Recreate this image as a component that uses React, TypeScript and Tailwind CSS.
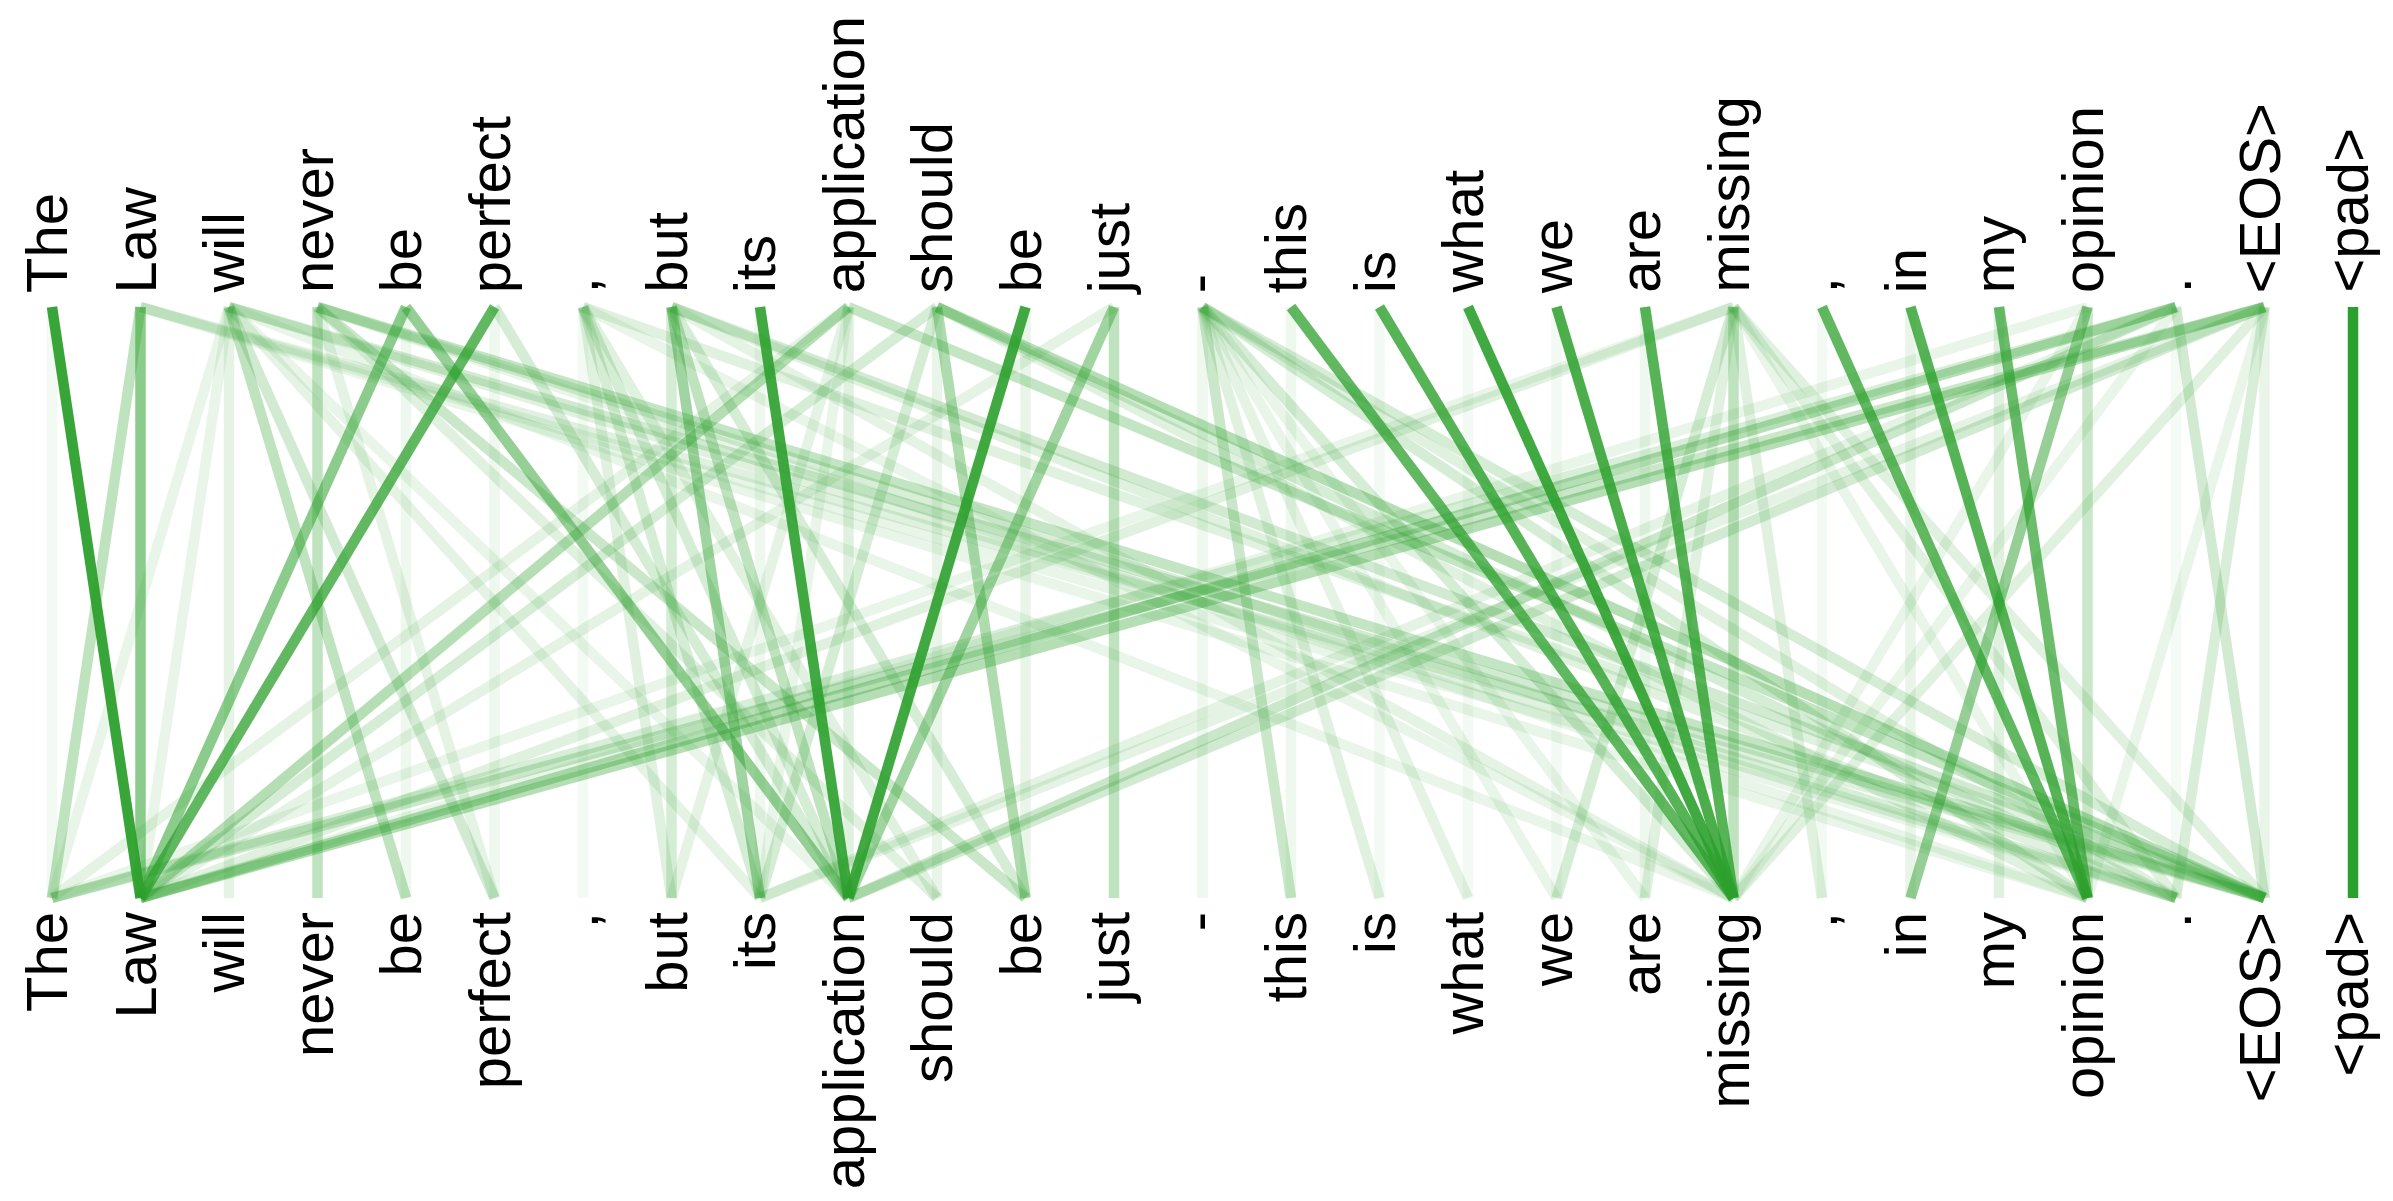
import React from "react";

const TOKENS = [
  "The", "Law", "will", "never", "be", "perfect", ",", "but", "its", "application",
  "should", "be", "just", "-", "this", "is", "what", "we", "are", "missing",
  ",", "in", "my", "opinion", ".", "<EOS>", "<pad>",
];

const X0 = 52;
const STEP = 88.5;
const Y_TOP = 7;
const Y_BOTTOM = 598;

// [top token, bottom token, weight]
const LINKS: [number, number, number][] = [
  [0, 1, 0.95], [0, 0, 0.06],
  [1, 1, 0.55], [1, 0, 0.3], [1, 25, 0.15], [1, 23, 0.1], [1, 24, 0.1],
  [2, 2, 0.12], [2, 4, 0.3], [2, 5, 0.22], [2, 0, 0.1], [2, 1, 0.1], [2, 25, 0.22],
  [2, 24, 0.15], [2, 19, 0.1], [2, 9, 0.1], [2, 8, 0.12],
  [3, 3, 0.3], [3, 11, 0.25], [3, 25, 0.28], [3, 24, 0.18], [3, 5, 0.12], [3, 10, 0.15], [3, 23, 0.1],
  [4, 1, 0.55], [4, 9, 0.5], [4, 4, 0.08],
  [5, 1, 0.75], [5, 9, 0.2], [5, 5, 0.08],
  [6, 8, 0.2], [6, 9, 0.2], [6, 10, 0.15], [6, 19, 0.1], [6, 25, 0.15], [6, 6, 0.06], [6, 7, 0.15],
  [7, 8, 0.45], [7, 9, 0.3], [7, 7, 0.2], [7, 11, 0.2], [7, 25, 0.22], [7, 24, 0.15], [7, 19, 0.12],
  [8, 9, 0.9], [8, 8, 0.08],
  [9, 1, 0.35], [9, 9, 0.15], [9, 0, 0.12], [9, 25, 0.28], [9, 8, 0.1], [9, 7, 0.12],
  [10, 11, 0.38], [10, 25, 0.35], [10, 24, 0.2], [10, 23, 0.15], [10, 10, 0.1], [10, 8, 0.2], [10, 1, 0.2],
  [11, 9, 0.9], [11, 11, 0.1],
  [12, 9, 0.45], [12, 12, 0.3], [12, 1, 0.12],
  [13, 14, 0.25], [13, 15, 0.15], [13, 16, 0.12], [13, 19, 0.2], [13, 23, 0.2], [13, 25, 0.2],
  [13, 24, 0.15], [13, 17, 0.1], [13, 18, 0.1], [13, 13, 0.08],
  [14, 19, 0.75], [15, 19, 0.8], [16, 19, 0.9], [17, 19, 0.85], [18, 19, 0.8],
  [14, 14, 0.08], [15, 15, 0.06], [16, 16, 0.06], [17, 17, 0.06], [18, 18, 0.08],
  [19, 19, 0.3], [19, 1, 0.15], [19, 0, 0.1], [19, 24, 0.15], [19, 25, 0.15], [19, 17, 0.2],
  [19, 18, 0.15], [19, 20, 0.15], [19, 23, 0.1],
  [20, 23, 0.75], [20, 20, 0.06],
  [21, 23, 0.8], [21, 21, 0.1],
  [22, 23, 0.7], [22, 22, 0.15],
  [23, 21, 0.5], [23, 23, 0.25], [23, 1, 0.1], [23, 19, 0.1],
  [24, 1, 0.35], [24, 0, 0.18], [24, 9, 0.25], [24, 25, 0.22], [24, 19, 0.1], [24, 24, 0.05], [24, 8, 0.12],
  [25, 1, 0.35], [25, 0, 0.25], [25, 9, 0.22], [25, 24, 0.18], [25, 25, 0.1], [25, 19, 0.15],
  [25, 23, 0.1], [25, 8, 0.12],
  [26, 26, 1],
];

const tokenX = (i: number) => X0 + STEP * i;

const Label = ({ text }: { text: string }) => (
  <span className="[writing-mode:vertical-rl] [text-orientation:sideways] rotate-180 -translate-x-[5px] whitespace-nowrap leading-none text-[58px] text-black font-['Liberation_Sans',Arial,sans-serif]">
    {text}
  </span>
);

const App = () => {
  const sorted = [...LINKS].sort((a, b) => a[2] - b[2]);

  return (
    <div className="w-[2393px] h-[1201px] bg-white flex flex-col overflow-hidden">
      <div className="h-[300px] pb-[7px] pl-[7.75px] grid grid-cols-[repeat(27,88.5px)] items-end">
        {TOKENS.map((t, i) => (
          <div key={i} className="flex justify-center">
            <Label text={t} />
          </div>
        ))}
      </div>

      <svg width={2393} height={605} className="block shrink-0">
        {sorted.map(([from, to, w], k) => (
          <line
            key={k}
            x1={tokenX(from)}
            y1={Y_TOP}
            x2={tokenX(to)}
            y2={Y_BOTTOM}
            stroke="#2ca02c"
            strokeOpacity={w}
            strokeWidth={10.5}
            strokeLinecap="butt"
          />
        ))}
      </svg>

      <div className="pt-[7px] pl-[7.75px] grid grid-cols-[repeat(27,88.5px)] items-start">
        {TOKENS.map((t, i) => (
          <div key={i} className="flex justify-center">
            <Label text={t} />
          </div>
        ))}
      </div>
    </div>
  );
};

export default App;
